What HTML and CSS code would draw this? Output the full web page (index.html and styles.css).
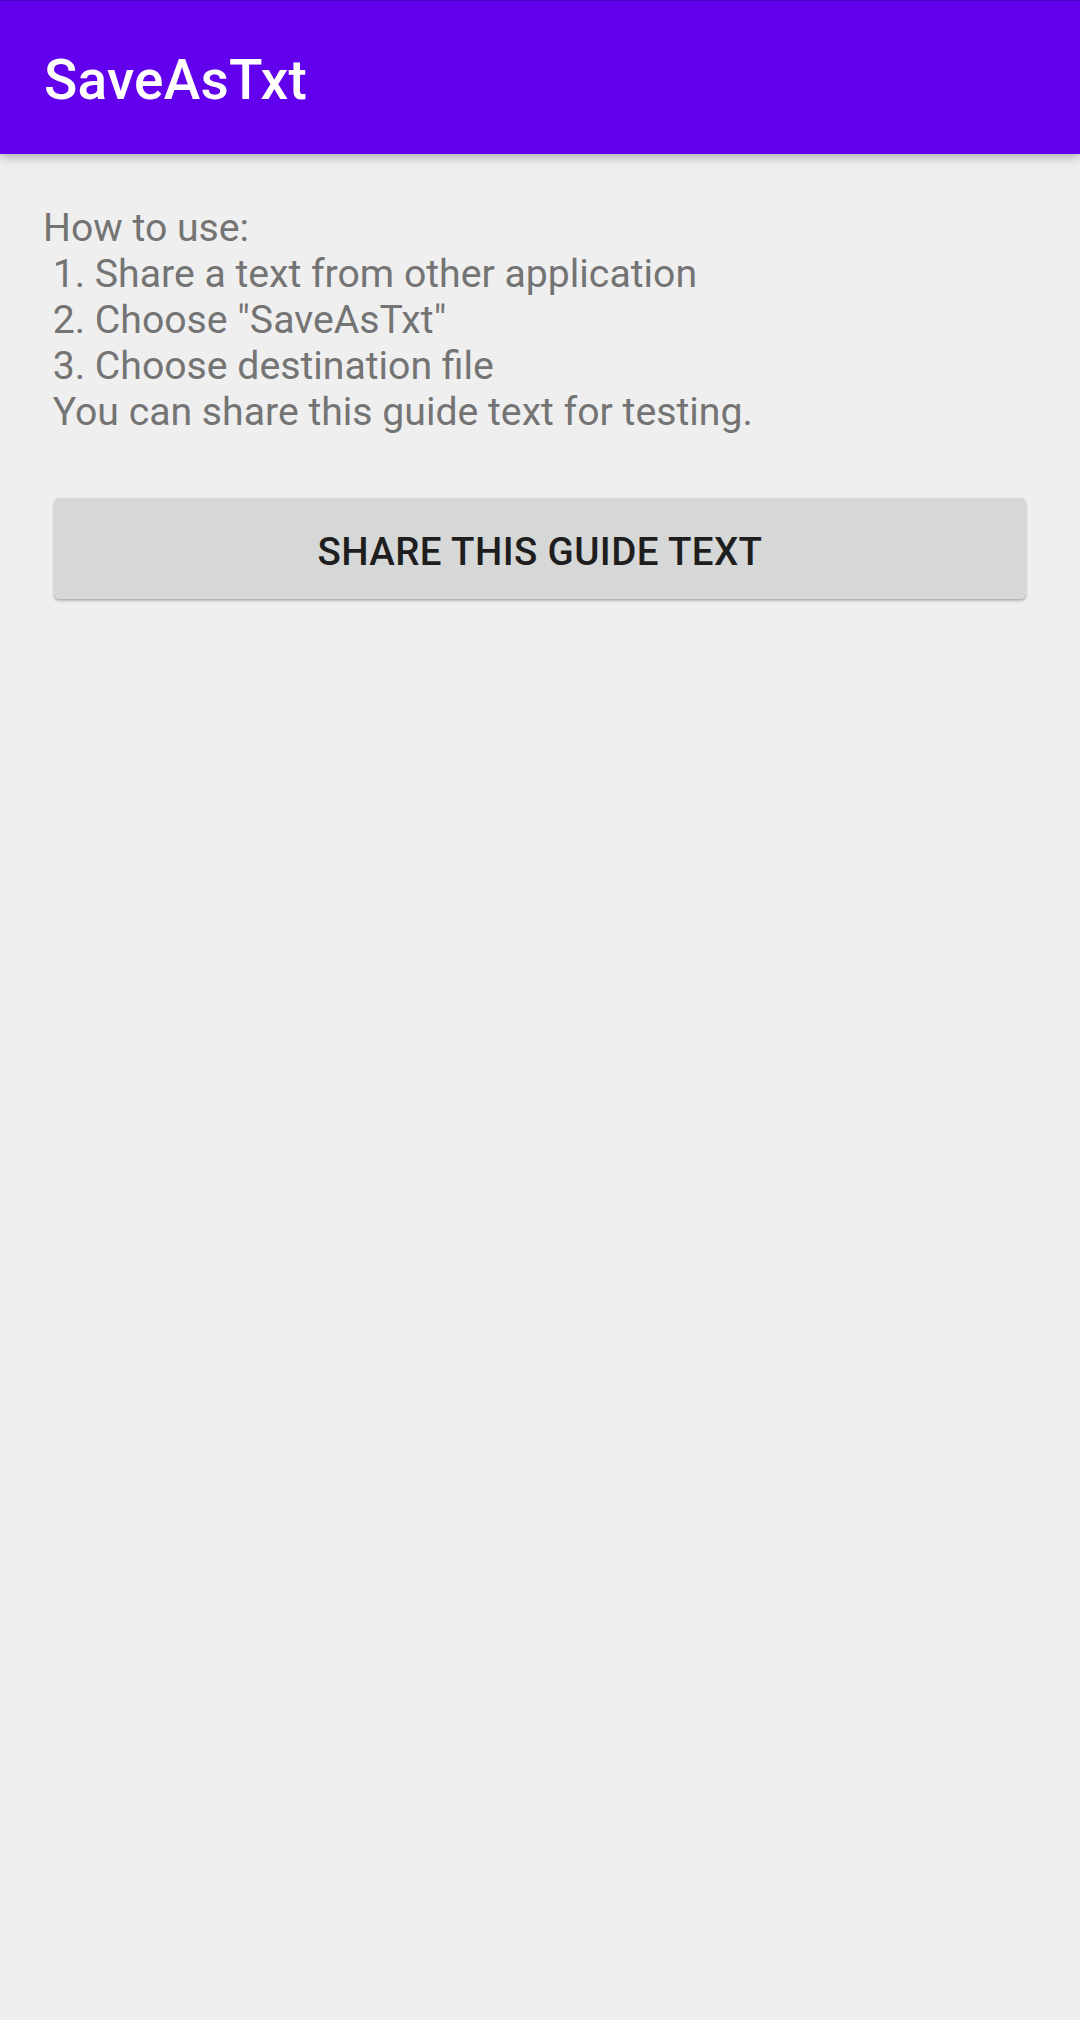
FILE: index.html
```html
<!DOCTYPE html>
<html lang="en">
<head>
<meta charset="utf-8">
<title>SaveAsTxt</title>
<link rel="stylesheet" href="styles.css">
</head>
<body>
<header class="appbar">
  <h1 class="title">SaveAsTxt</h1>
</header>
<main class="content">
  <p class="guide">How to use:<br>&nbsp;1. Share a text from other application<br>&nbsp;2. Choose "SaveAsTxt"<br>&nbsp;3. Choose destination file<br>&nbsp;You can share this guide text for testing.</p>
  <div class="actions">
    <button class="share-btn" type="button">SHARE THIS GUIDE TEXT</button>
  </div>
</main>
</body>
</html>
```

FILE: styles.css
```css
html, body {
  margin: 0;
  padding: 0;
}
body {
  width: 1080px;
  height: 2020px;
  background: #efefef;
  font-family: Roboto, "Noto Sans", sans-serif;
  overflow: hidden;
}
.appbar {
  position: relative;
  z-index: 1;
  height: 154px;
  box-sizing: border-box;
  border-top: 1px solid #4b00c4;
  background: #6200ee;
  display: flex;
  align-items: center;
  padding: 6px 0 0 44px;
  box-shadow: 0 3px 10px rgba(0, 0, 0, 0.28);
}
.title {
  margin: 0;
  color: #ffffff;
  font-size: 55px;
  font-weight: 500;
  line-height: 1;
  letter-spacing: 0.2px;
}
.content {
  padding: 51px 54px 0 43px;
  display: flex;
  flex-direction: column;
}
.guide {
  margin: 0;
  color: #747474;
  font-size: 39.2px;
  line-height: 46px;
  white-space: pre;
}
.actions {
  display: flex;
  padding: 63px 0 0 11px;
}
.share-btn {
  flex: 1;
  height: 101px;
  border: none;
  border-radius: 5px;
  background: #d6d7d7;
  color: #1e1e1e;
  font-family: Roboto, "Noto Sans", sans-serif;
  font-size: 38.5px;
  font-weight: 500;
  letter-spacing: 0.4px;
  box-shadow: 0 2px 3px rgba(0, 0, 0, 0.22), 0 1px 1px rgba(0, 0, 0, 0.08);
  padding: 5px 0 0 0;
}
```
